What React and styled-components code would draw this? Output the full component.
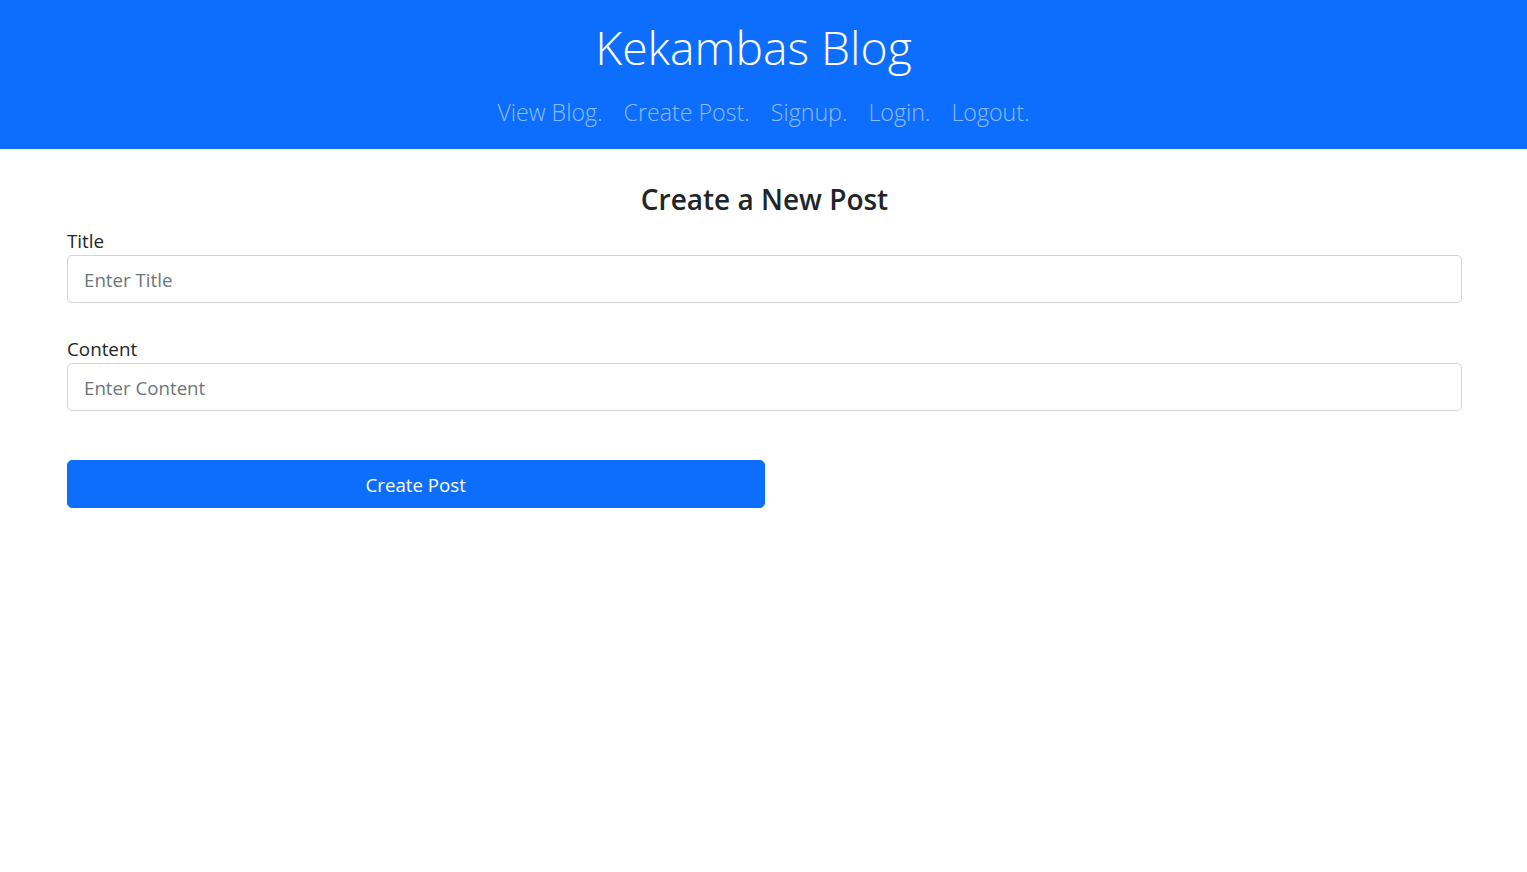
import React from "react";
import styled, { createGlobalStyle } from "styled-components";

const Global = createGlobalStyle`
  html, body { margin: 0; padding: 0; background: #fff; }
  body {
    font-family: "Open Sans", "Noto Sans", sans-serif;
    color: #212529;
    -webkit-font-smoothing: antialiased;
  }
  * { box-sizing: border-box; }
`;

const Header = styled.header`
  background: #0d6efd;
  height: 149px;
  display: flex;
  flex-direction: column;
  align-items: center;
  padding-top: 17px;
`;

const Brand = styled.h1`
  margin: 0;
  padding-right: 20px;
  font-weight: 300;
  font-size: 46.3px;
  line-height: 62px;
  color: #fff;
`;

const Nav = styled.nav`
  display: flex;
  gap: 21px;
  margin-top: 15px;
`;

const NavLink = styled.a`
  color: rgba(255, 255, 255, 0.55);
  font-size: 23.2px;
  font-weight: 300;
  line-height: 36px;
  text-decoration: none;
  cursor: pointer;
`;

const Main = styled.main`
  padding: 33px 65px 0 67px;
`;

const Heading = styled.h3`
  margin: 0 0 13px;
  text-align: center;
  font-size: 28px;
  font-weight: 600;
  line-height: 34px;
  color: #212529;
`;

const Field = styled.div`
  margin-bottom: ${(p) => p.$mb}px;
`;

const Label = styled.label`
  display: block;
  font-size: 18.8px;
  line-height: 24px;
  margin-bottom: 2px;
`;

const Input = styled.input`
  display: block;
  width: 100%;
  height: 48px;
  padding: 8px 16px;
  font-family: inherit;
  font-size: 18.7px;
  color: #212529;
  border: 1px solid #ced4da;
  border-radius: 5px;
  outline: none;
  &::placeholder { color: #6c757d; }
`;

const Button = styled.button`
  width: 50%;
  height: 48px;
  background: #0d6efd;
  border: 1px solid #0d6efd;
  border-radius: 5px;
  color: #fff;
  font-family: inherit;
  font-size: 18.7px;
  cursor: pointer;
`;

export default function App() {
  const links = ["View Blog.", "Create Post.", "Signup.", "Login.", "Logout."];
  return (
    <>
      <Global />
      <Header>
        <Brand>Kekambas Blog</Brand>
        <Nav>
          {links.map((l) => (
            <NavLink key={l}>{l}</NavLink>
          ))}
        </Nav>
      </Header>
      <Main>
        <Heading>Create a New Post</Heading>
        <Field $mb={34}>
          <Label>Title</Label>
          <Input placeholder="Enter Title" />
        </Field>
        <Field $mb={49}>
          <Label>Content</Label>
          <Input placeholder="Enter Content" />
        </Field>
        <Button>Create Post</Button>
      </Main>
    </>
  );
}
